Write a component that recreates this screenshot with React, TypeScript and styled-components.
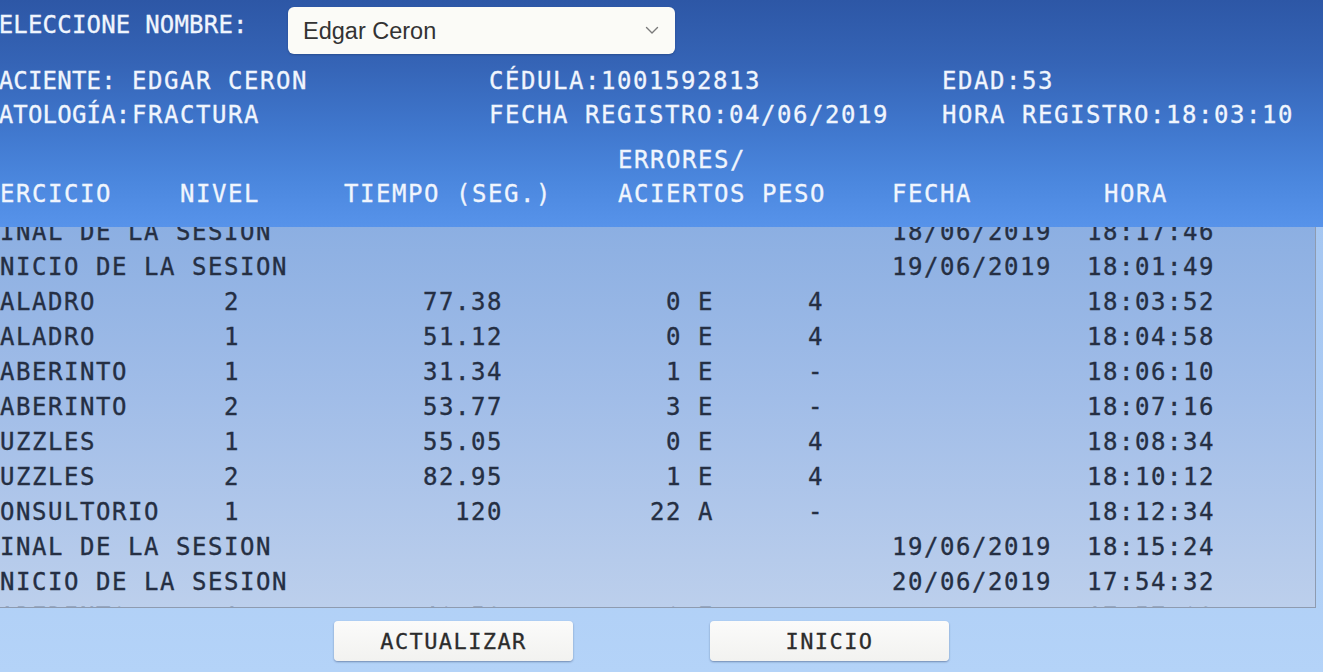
import React from "react";
import styled, { createGlobalStyle } from "styled-components";

const GlobalStyle = createGlobalStyle`
  html, body {
    margin: 0;
    padding: 0;
    width: 1323px;
    height: 672px;
    overflow: hidden;
  }
  body {
    background: #b0cff6;
    font-family: "DejaVu Sans Mono", "Liberation Mono", monospace;
  }
`;

const Page = styled.div`
  width: 1323px;
  height: 672px;
  display: flex;
  flex-direction: column;
  overflow: hidden;
  background: linear-gradient(180deg, #9fc2f0 0%, #aacaf3 60%, #b4d3f8 100%);
`;

const Header = styled.header`
  flex: none;
  height: 227px;
  box-sizing: border-box;
  padding-top: 7px;
  display: flex;
  flex-direction: column;
  background: linear-gradient(180deg, #2d57a6 0%, #3564b6 28%, #3f76cc 55%, #4b87de 80%, #5793ea 100%);
  color: #f0f5fd;
  font-size: 24px;
  line-height: 34px;
  letter-spacing: 1.55px;
  -webkit-text-stroke: 0.3px currentColor;
`;

const SelectRow = styled.div`
  display: flex;
  align-items: flex-start;
  margin-left: -16px;
`;

const SelectLabel = styled.span`
  width: 304px;
  margin-top: 1px;
  white-space: nowrap;
  letter-spacing: 0.2px;
`;

const SelectBox = styled.div`
  width: 387px;
  height: 47px;
  box-sizing: border-box;
  display: flex;
  align-items: center;
  justify-content: space-between;
  padding: 0 16px 0 15px;
  background: #fbfbf7;
  border-radius: 6px;
  box-shadow: 0 1px 2px rgba(20, 40, 80, 0.35);
  color: #333333;
  font-family: "Liberation Sans", Arial, sans-serif;
  font-size: 23.5px;
  letter-spacing: 0;
  -webkit-text-stroke: 0;
`;

const InfoGrid = styled.div`
  margin-top: 10px;
  margin-left: -16px;
  display: grid;
  grid-template-columns: 505px 453px 1fr;
  grid-auto-rows: 34px;
`;

const LeftPair = styled.div`
  display: grid;
  grid-template-columns: 148px 1fr;
  white-space: nowrap;
`;

const LeftLabel = styled.span`
  letter-spacing: 0.2px;
`;

const Pair = styled.div`
  white-space: nowrap;
`;

const ColumnHeads = styled.div`
  margin-top: 11px;
  margin-left: -32px;
  display: grid;
  grid-template-columns: 212px 164px 274px 144px 130px 212px 1fr;
  height: 68px;
  align-items: end;
  white-space: nowrap;
`;

const Head = styled.div`
  display: flex;
  flex-direction: column;
`;

const TableBox = styled.section`
  flex: none;
  height: 381px;
  margin-right: 7px;
  box-sizing: border-box;
  overflow: hidden;
  border-right: 1px solid #8e9bb0;
  border-bottom: 1px solid #8e9bb0;
  background: linear-gradient(180deg, #8cafe2 0%, #a1bde8 45%, #bccfec 100%);
`;

const Rows = styled.div`
  margin-top: -12px;
  margin-left: -16px;
  color: #252f43;
  font-size: 24px;
  letter-spacing: 1.55px;
  -webkit-text-stroke: 0.35px currentColor;
`;

const Row = styled.div`
  display: grid;
  grid-template-columns: 216px 64px 239px 211px 176px 162px 163px;
  height: 35px;
  line-height: 35px;
  white-space: nowrap;
`;

const Cell = styled.span<{ $align?: "left" | "center" | "right"; $pad?: number }>`
  text-align: ${(p) => p.$align ?? "left"};
  padding-left: ${(p) => p.$pad ?? 0}px;
`;

const Footer = styled.footer`
  flex: 1;
  display: flex;
  align-items: flex-start;
  gap: 137px;
  padding: 13px 0 0 334px;
`;

const Button = styled.button`
  width: 239px;
  height: 40px;
  border: none;
  border-radius: 4px;
  background: linear-gradient(180deg, #fbfbfa 0%, #f2f2f0 100%);
  box-shadow: 0 1px 2px rgba(30, 50, 90, 0.45);
  color: #2c2c2c;
  font-family: "DejaVu Sans Mono", monospace;
  font-size: 22px;
  letter-spacing: 1.4px;
  -webkit-text-stroke: 0.3px currentColor;
  padding: 0;
  cursor: pointer;
`;

const Chevron = () => (
  <svg width="14" height="9" viewBox="0 0 14 9" aria-hidden>
    <path d="M1.5 1.5 L7 7 L12.5 1.5" fill="none" stroke="#7a7a7a" strokeWidth="1.4" strokeLinecap="round" strokeLinejoin="round" />
  </svg>
);

type Rec = [string, string, string, string, string, string, string];

const records: Rec[] = [
  ["FINAL DE LA SESION", "", "", "", "", "18/06/2019", "18:17:46"],
  ["INICIO DE LA SESION", "", "", "", "", "19/06/2019", "18:01:49"],
  ["TALADRO", "2", "77.38", "0 E", "4", "", "18:03:52"],
  ["TALADRO", "1", "51.12", "0 E", "4", "", "18:04:58"],
  ["LABERINTO", "1", "31.34", "1 E", "-", "", "18:06:10"],
  ["LABERINTO", "2", "53.77", "3 E", "-", "", "18:07:16"],
  ["PUZZLES", "1", "55.05", "0 E", "4", "", "18:08:34"],
  ["PUZZLES", "2", "82.95", "1 E", "4", "", "18:10:12"],
  ["CONSULTORIO", "1", "120", "22 A", "-", "", "18:12:34"],
  ["FINAL DE LA SESION", "", "", "", "", "19/06/2019", "18:15:24"],
  ["INICIO DE LA SESION", "", "", "", "", "20/06/2019", "17:54:32"],
  ["LABERINTO", "1", "40.52", "0 E", "-", "", "17:57:03"],
];

export default function App() {
  return (
    <>
      <GlobalStyle />
      <Page>
        <Header>
          <SelectRow>
            <SelectLabel>SELECCIONE NOMBRE:</SelectLabel>
            <SelectBox role="combobox">
              <span>Edgar Ceron</span>
              <Chevron />
            </SelectBox>
          </SelectRow>
          <InfoGrid>
            <LeftPair>
              <LeftLabel>PACIENTE:</LeftLabel>
              <span>EDGAR CERON</span>
            </LeftPair>
            <Pair>CÉDULA:1001592813</Pair>
            <Pair>EDAD:53</Pair>
            <LeftPair>
              <LeftLabel>PATOLOGÍA:</LeftLabel>
              <span>FRACTURA</span>
            </LeftPair>
            <Pair>FECHA REGISTRO:04/06/2019</Pair>
            <Pair>HORA REGISTRO:18:03:10</Pair>
          </InfoGrid>
          <ColumnHeads>
            <Head>EJERCICIO</Head>
            <Head>NIVEL</Head>
            <Head>TIEMPO (SEG.)</Head>
            <Head>
              <span>ERRORES/</span>
              <span>ACIERTOS</span>
            </Head>
            <Head>PESO</Head>
            <Head>FECHA</Head>
            <Head>HORA</Head>
          </ColumnHeads>
        </Header>
        <TableBox>
          <Rows>
            {records.map((r, i) => (
              <Row key={i}>
                <Cell>{r[0]}</Cell>
                <Cell $align="center">{r[1]}</Cell>
                <Cell $align="right">{r[2]}</Cell>
                <Cell $align="right">{r[3]}</Cell>
                <Cell $pad={94}>{r[4]}</Cell>
                <Cell $align="right">{r[5]}</Cell>
                <Cell $align="right">{r[6]}</Cell>
              </Row>
            ))}
          </Rows>
        </TableBox>
        <Footer>
          <Button>ACTUALIZAR</Button>
          <Button>INICIO</Button>
        </Footer>
      </Page>
    </>
  );
}
